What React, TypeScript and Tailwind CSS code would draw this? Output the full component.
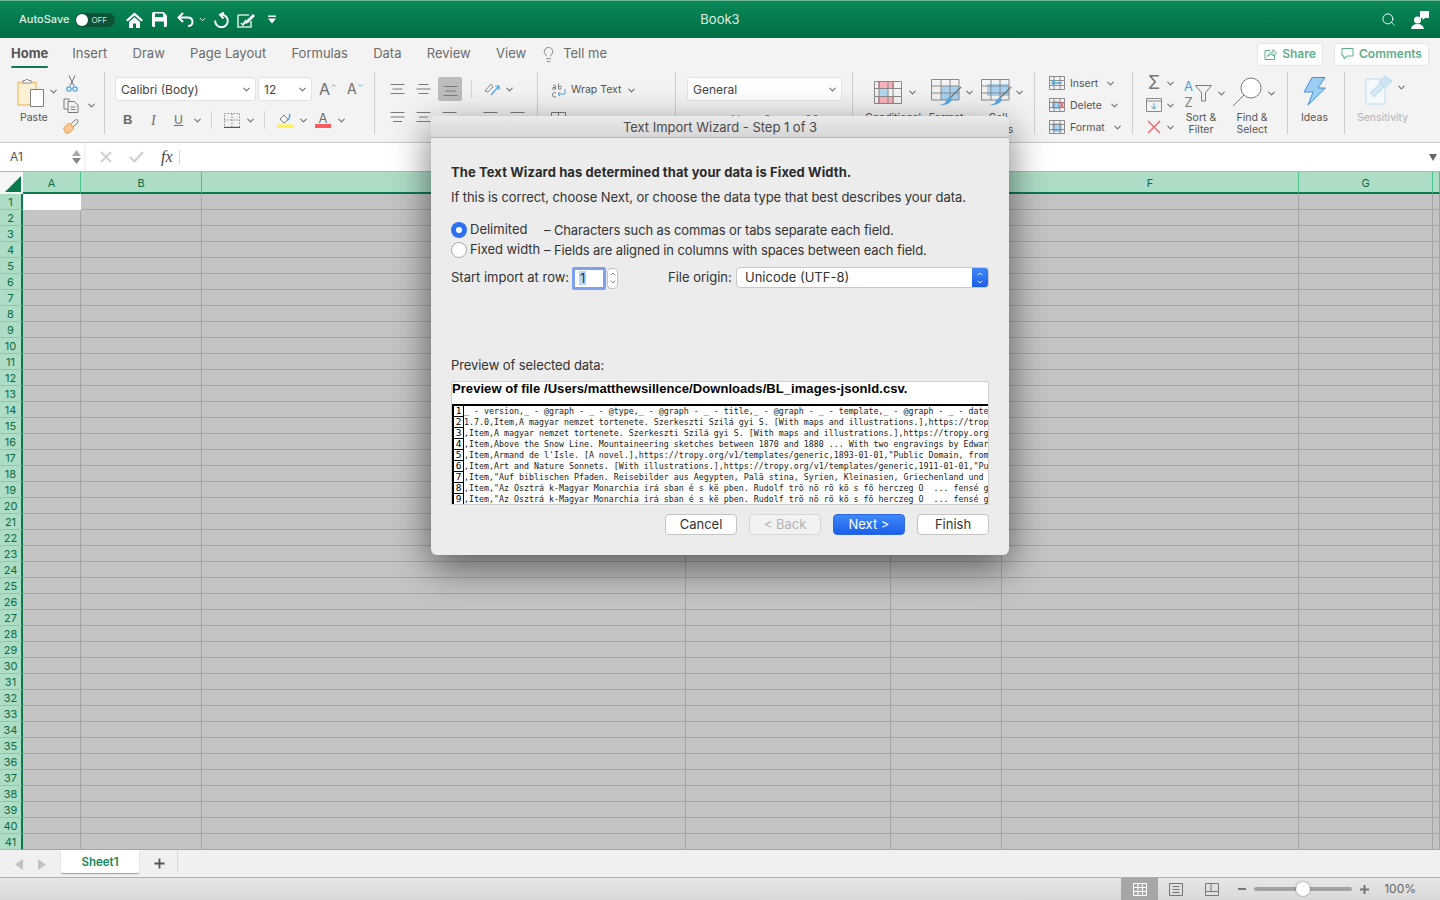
import { ChevronDown, ChevronUp, Search, Lightbulb } from 'lucide-react'

const ui = '[font-family:Inter,"Noto_Sans",sans-serif]'

const columns = [
  { label: 'A', width: 'w-[58px]' },
  { label: 'B', width: 'w-[121px]' },
  { label: 'C', width: 'w-[484px]' },
  { label: 'D', width: 'w-[205px]' },
  { label: 'E', width: 'w-[111px]' },
  { label: 'F', width: 'w-[297px]' },
  { label: 'G', width: 'w-[134px]' },
  { label: '', width: 'w-[7px]' },
]

const rows = Array.from({ length: 41 }, (_, i) => i + 1)

const previewLines = [
  '_ - version,_ - @graph - _ - @type,_ - @graph - _ - title,_ - @graph - _ - template,_ - @graph - _ - date',
  '1.7.0,Item,A magyar nemzet tortenete. Szerkeszti Szilá gyi S. [With maps and illustrations.],https://trop',
  ',Item,A magyar nemzet tortenete. Szerkeszti Szilá gyi S. [With maps and illustrations.],https://tropy.org',
  ',Item,Above the Snow Line. Mountaineering sketches between 1870 and 1880 ... With two engravings by Edwar',
  ',Item,Armand de l\'Isle. [A novel.],https://tropy.org/v1/templates/generic,1893-01-01,"Public Domain, from',
  ',Item,Art and Nature Sonnets. [With illustrations.],https://tropy.org/v1/templates/generic,1911-01-01,"Pu',
  ',Item,"Auf biblischen Pfaden. Reisebilder aus Aegypten, Palä stina, Syrien, Kleinasien, Griechenland und',
  ',Item,"Az Osztrá k-Magyar Monarchia irá sban é s kë pben. Rudolf trö nö rö kö s fö herczeg O  ... fensé g',
  ',Item,"Az Osztrá k-Magyar Monarchia irá sban é s kë pben. Rudolf trö nö rö kö s fö herczeg O  ... fensé g',
]

function Chev({ className = '' }: { className?: string }) {
  return <ChevronDown size={11} strokeWidth={2.2} className={`shrink-0 text-[#6e6e6e] ${className}`} />
}

function Lines({ widths }: { widths: number[] }) {
  return (
    <svg width="15" height="14" viewBox="0 0 15 14" className="shrink-0">
      {widths.map((w, i) => (
        <line key={i} x1={(15 - w) / 2} x2={(15 + w) / 2} y1={2.5 + i * 4.5} y2={2.5 + i * 4.5} stroke="#7a7a7a" />
      ))}
    </svg>
  )
}

function TitleIcons() {
  return (
    <div className="flex items-center ml-[11px]">
      <svg width="17" height="16" viewBox="0 0 17 16" className="shrink-0">
        <path d="M8.5 0.5 L17 8 L15.4 9.4 L8.5 3.4 L1.6 9.4 L0 8 Z M3 10 L8.5 5.2 L14 10 V16 H10 V11.5 H7 V16 H3 Z" fill="#fff" />
      </svg>
      <svg width="15" height="15" viewBox="0 0 15 15" className="ml-[9px] shrink-0">
        <path d="M0 1.5 Q0 0 1.5 0 H11.5 L15 3.5 V13.5 Q15 15 13.5 15 H1.5 Q0 15 0 13.5 Z" fill="#fff" />
        <rect x="3" y="1.5" width="8" height="3.6" fill="#057a50" />
        <rect x="3" y="9.5" width="9" height="5.5" fill="#057a50" />
      </svg>
      <svg width="17" height="15" viewBox="0 0 17 15" className="ml-[10px] shrink-0" fill="none" stroke="#fff" strokeWidth="1.9">
        <path d="M6 1 L1.5 5.5 L6 10" />
        <path d="M1.5 5.5 H10.5 Q15.5 5.5 15.5 10 Q15.5 14 11 14" />
      </svg>
      <ChevronDown size={9} strokeWidth={2.5} className="ml-[4px] text-white shrink-0" />
      <svg width="16" height="16" viewBox="0 0 16 16" className="ml-[6px] shrink-0" fill="none" stroke="#fff" strokeWidth="1.9">
        <path d="M8.5 2.6 A6.3 6.3 0 1 1 2.2 8.5" />
        <path d="M11 0.5 L7 2.8 L10.5 6.5" />
      </svg>
      <svg width="19" height="16" viewBox="0 0 19 16" className="ml-[8px] shrink-0" fill="none">
        <path d="M1 3 H12 M1 3 V15 H14 V9" stroke="#cfe8dc" strokeWidth="1.6" />
        <path d="M4 11 L6 13 L9 8" stroke="#fff" strokeWidth="1.5" />
        <path d="M9 9 L16 2 L18 4 L11 11 L8 12 Z" fill="#fff" />
      </svg>
      <svg width="8" height="9" viewBox="0 0 8 9" className="ml-[12px] shrink-0">
        <rect y="0.5" width="8" height="1.4" fill="#fff" />
        <path d="M0 3.5 H8 L4 8.5 Z" fill="#fff" />
      </svg>
    </div>
  )
}

function PasteIcon() {
  return (
    <svg width="28" height="30" viewBox="0 0 28 30" className="shrink-0" fill="none">
      <path d="M1 4.5 H19 V27 H1 Z" fill="#fdf1d4" stroke="#f2c377" strokeWidth="1.4" />
      <path d="M6 5 V2.5 H8 Q10 0 12 2.5 H14 V5 Z" fill="#fff" stroke="#8a8a8a" />
      <path d="M13.5 11.5 H26.5 V28.5 H13.5 Z" fill="#fff" stroke="#7f7f7f" />
    </svg>
  )
}

function ClipboardGroup() {
  return (
    <div className="flex w-[105px] h-[62px] shrink-0 border-r border-[#cfcfcf] pl-[17px]">
      <div className="flex flex-col w-[46px] shrink-0 pt-[6px]">
        <div className="flex items-center">
          <PasteIcon />
          <Chev className="ml-[3px] mt-[-4px]" />
        </div>
        <span className="mt-[3px] ml-[3px] text-[10.5px] leading-[13px] text-[#555]">Paste</span>
      </div>
      <div className="flex flex-col pt-[3px]">
        <svg width="12" height="17" viewBox="0 0 12 17" className="ml-[3px] shrink-0" fill="none" stroke="#6f6f6f">
          <path d="M3 0.5 L8 11 M9 0.5 L4 11" />
          <circle cx="3" cy="14" r="2.2" stroke="#4aa3dc" strokeWidth="1.2" />
          <circle cx="9" cy="14" r="2.2" stroke="#4aa3dc" strokeWidth="1.2" />
        </svg>
        <div className="flex items-center mt-[6px] shrink-0">
          <svg width="17" height="15" viewBox="0 0 17 15" fill="none" stroke="#7a7a7a">
            <path d="M1 1 H6 V11 H1 Z" />
            <path d="M5 3.5 H11 L15 7 V14.5 H5 Z" fill="#f2f2f2" />
            <path d="M7.5 9 H12.5 M7.5 11.5 H12.5" />
          </svg>
          <Chev className="ml-[6px]" />
        </div>
        <svg width="16" height="15" viewBox="0 0 16 15" className="mt-[6px] shrink-0" fill="none">
          <path d="M0.5 9 L6 4 L11 9 Q8 14 3 14.5 Z" fill="#fbc795" stroke="#ef9a4a" />
          <path d="M8 5 L12 1 Q14 0 15 1.5 Q15.5 3 14 4.5 L10 7.5" fill="#f4f4f4" stroke="#7a7a7a" />
        </svg>
      </div>
    </div>
  )
}

function FontGroup() {
  return (
    <div className="flex flex-col w-[270px] h-[62px] shrink-0 border-r border-[#cfcfcf] pl-[10px]">
      <div className="flex items-center mt-[5px]">
        <div className="flex items-center justify-between w-[141px] h-[24px] bg-white rounded-[3px] border border-[#e2e2e2] pl-[5px] pr-[3px] pt-px text-[12px] text-[#444]">
          <span>Calibri (Body)</span>
          <Chev />
        </div>
        <div className="flex items-center justify-between w-[54px] h-[24px] ml-[2px] bg-white rounded-[3px] border border-[#e2e2e2] pl-[5px] pr-[3px] pt-px text-[12px] text-[#444]">
          <span>12</span>
          <Chev />
        </div>
        <span className="ml-[7px] text-[16px] leading-none text-[#6e6e6e]">A</span>
        <ChevronUp size={7} strokeWidth={3} className="text-[#5aa9e0] mb-[8px]" />
        <span className="ml-[10px] text-[14px] leading-none text-[#6e6e6e]">A</span>
        <ChevronDown size={7} strokeWidth={3} className="text-[#5aa9e0] mb-[8px]" />
      </div>
      <div className="flex items-center mt-[9px] h-[20px] text-[#6b6b6b]">
        <span className="w-[8px] ml-[8px] [font-family:'Liberation_Sans',sans-serif] font-bold text-[13px]">B</span>
        <span className="w-[8px] ml-[20px] [font-family:'Liberation_Serif',serif] italic text-[14px]">I</span>
        <span className="ml-[15px] w-[11px] text-[12px] leading-[14px] underline">U</span>
        <Chev className="ml-[7px]" />
        <div className="w-px h-[18px] bg-[#d4d4d4] ml-[8px]" />
        <svg width="16" height="15" viewBox="0 0 16 15" className="ml-[12px] shrink-0" fill="none">
          <path d="M0.5 0.5 H15.5 V14 H0.5 Z M8 0.5 V14 M0.5 7 H15.5" stroke="#8a8a8a" strokeDasharray="1.5 1.5" />
          <path d="M0 14.5 H16" stroke="#555" />
        </svg>
        <Chev className="ml-[5px]" />
        <div className="w-px h-[18px] bg-[#d4d4d4] ml-[8px]" />
        <svg width="16" height="15" viewBox="0 0 16 15" className="ml-[12px] shrink-0" fill="none">
          <path d="M3 6 L7 2 L11 7 L7 10 Z" stroke="#7a7a7a" fill="#fff" />
          <path d="M11 7 Q14 3 12 1" stroke="#4aa3dc" strokeWidth="1.4" />
          <rect y="11.5" width="16" height="3.5" fill="#fff44f" />
        </svg>
        <Chev className="ml-[5px]" />
        <div className="flex flex-col items-center ml-[6px] w-[16px]">
          <span className="text-[13px] leading-[12px] text-[#6e6e6e]">A</span>
          <div className="w-[16px] h-[4px] bg-[#ff5a5f]" />
        </div>
        <Chev className="ml-[5px]" />
      </div>
    </div>
  )
}

function AlignGroup() {
  return (
    <div className="flex flex-col w-[163px] h-[62px] shrink-0 border-r border-[#cfcfcf] pl-[15px]">
      <div className="flex items-center mt-[5px]">
        <Lines widths={[14, 10, 14]} />
        <div className="ml-[11px]"><Lines widths={[10, 14, 10]} /></div>
        <div className="flex items-center justify-center w-[24px] h-[24px] ml-[7px] rounded-[2px] bg-[#bdbdbd]">
          <div className="mt-[3px]"><Lines widths={[14, 10, 14]} /></div>
        </div>
        <div className="w-px h-[18px] bg-[#d4d4d4] ml-[9px]" />
        <svg width="16" height="14" viewBox="0 0 16 14" className="ml-[12px] shrink-0" fill="none">
          <path d="M1 9 L7 2 L9 5 L4 10 Z" stroke="#8a8a8a" />
          <path d="M7 13 L15 4 M11 4 H15 V8" stroke="#4aa3dc" strokeWidth="1.2" />
        </svg>
        <Chev className="ml-[4px]" />
      </div>
      <div className="flex items-center mt-[9px]">
        <Lines widths={[14, 14, 9]} />
        <div className="ml-[11px]"><Lines widths={[14, 9, 14]} /></div>
        <div className="ml-[11px]"><Lines widths={[14, 14, 9]} /></div>
        <div className="ml-[26px]"><Lines widths={[14, 14, 14]} /></div>
        <div className="ml-[12px]"><Lines widths={[14, 14, 14]} /></div>
      </div>
    </div>
  )
}

function WrapGroup() {
  return (
    <div className="flex flex-col w-[138px] h-[62px] shrink-0 border-r border-[#cfcfcf] pl-[13px]">
      <div className="flex items-center mt-[10px] h-[16px]">
        <svg width="15" height="15" viewBox="0 0 15 15" className="shrink-0">
          <path d="M2 2.5 Q4 1.5 4.5 3 V6.5 M4.5 4.5 Q1 4 1 5.5 Q1.5 7.5 4.5 5.5 M7.5 0.5 V6.5 M7.5 4.5 Q8.5 2.8 10 3.2 Q11 4.5 10 5.8 Q8.5 7 7.5 5.5 M5 10 Q3.5 8.800 2 10 Q1 12 2 13.5 Q3.5 14.5 5 13.5" stroke="#777" fill="none" strokeWidth="0.9" />
          <path d="M14 6 V11 H7 M9 9 L7 11 L9 13" stroke="#4aa3dc" fill="none" />
        </svg>
        <span className="ml-[5px] text-[10.5px] text-[#555]">Wrap Text</span>
        <Chev className="ml-[5px]" />
      </div>
      <svg width="15" height="14" viewBox="0 0 15 14" className="mt-[14px] shrink-0" fill="none" stroke="#7a7a7a">
        <path d="M0.5 0.5 H14.5 V13.5 H0.5 Z M7.5 0.5 V13.5 M0.5 7 H14.5" />
      </svg>
    </div>
  )
}

function NumberGroup() {
  return (
    <div className="flex flex-col w-[177px] h-[62px] shrink-0 border-r border-[#cfcfcf] pl-[11px]">
      <div className="flex items-center justify-between w-[155px] h-[24px] mt-[5px] bg-white rounded-[3px] border border-[#e2e2e2] pl-[5px] pr-[3px] pt-px text-[12px] text-[#444]">
        <span>General</span>
        <Chev />
      </div>
      <div className="flex items-center mt-[10px] pl-[43px] text-[12px] text-[#777]">
        <span>%</span>
        <span className="ml-[22px]">9</span>
        <span className="ml-[30px]">.00</span>
      </div>
    </div>
  )
}

function StyleIcon({ kind }: { kind: 'cond' | 'table' | 'cell' }) {
  if (kind === 'cond') {
    return (
      <svg width="28" height="23" viewBox="0 0 28 23" className="shrink-0" fill="none">
        <rect x="5" y="0.5" width="14" height="7" fill="#f9b4bb" />
        <rect x="5" y="8" width="9" height="7" fill="#b0d6f2" />
        <rect x="5" y="15.5" width="14" height="7" fill="#f9b4bb" />
        <path d="M5 0.5 H19 V7.5 H5 Z M5 15.5 H19 V22.5 H5 Z" stroke="#ee5b62" />
        <path d="M0.5 0.5 H27.5 V22.5 H0.5 Z M0.5 7.5 H27.5 M0.5 15.5 H27.5 M5 0.5 V22.5 M14 0.5 V22.5 M19 0.5 V22.5" stroke="#8a8a8a" />
      </svg>
    )
  }
  return (
    <svg width="31" height="27" viewBox="0 0 31 27" className="shrink-0" fill="none">
      {kind === 'table' ? <rect x="10" y="7" width="18" height="14" fill="#a8d2f2" /> : <rect x="6" y="5" width="22" height="12" fill="#a8d2f2" />}
      <path d="M0.5 0.5 H28 V21 H0.5 Z M0.5 7 H28 M0.5 14 H28 M10 0.5 V21 M19 0.5 V21" stroke="#8a8a8a" />
      <path d="M30 8 L19 19" stroke="#777" strokeWidth="1.5" />
      <path d="M19 18 Q15 20 14 24 Q10 26 8 26 Q18 27 21 21 Z" fill="#5aa9e0" />
    </svg>
  )
}

function StylesGroup() {
  const items = [
    { kind: 'cond' as const, top: 'Conditional', bottom: 'Formatting', box: 'w-[57px]', chev: 'ml-[5px]', label: 'w-[38px]' },
    { kind: 'table' as const, top: 'Format', bottom: 'as Table', box: 'w-[50px]', chev: 'ml-[2px]', label: 'w-[30px]' },
    { kind: 'cell' as const, top: 'Cell', bottom: 'Styles', box: 'w-[50px]', chev: 'ml-[2px]', label: 'w-[34px]' },
  ]
  return (
    <div className="flex w-[182px] h-[62px] shrink-0 border-r border-[#cfcfcf] pl-[21px]">
      {items.map((item) => (
        <div key={item.top} className={`flex flex-col shrink-0 ${item.box} pt-[7px]`}>
          <div className="flex items-center h-[27px] shrink-0">
            <StyleIcon kind={item.kind} />
            <Chev className={item.chev} />
          </div>
          <div className={`flex flex-col items-center shrink-0 ${item.label} mt-[6px] text-[10.5px] leading-[12px] text-[#555] whitespace-nowrap`}>
            <div>{item.top}</div>
            <div>{item.bottom}</div>
          </div>
        </div>
      ))}
    </div>
  )
}

function CellAction({ label, kind }: { label: string; kind: 'insert' | 'delete' | 'format' }) {
  return (
    <div className="flex items-center h-[22px] shrink-0">
      <svg width="16" height="14" viewBox="0 0 16 14" className="shrink-0" fill="none">
        {kind === 'format' && <rect x="4" y="4" width="8" height="7" fill="#a8d2f2" stroke="#6fa8d8" />}
        {kind === 'delete' && <rect x="4" y="4" width="6" height="6" fill="#a8d2f2" stroke="#4a90d0" />}
        <path d="M0.5 0.5 H15.5 V13.5 H0.5 Z M0.5 4.5 H15.5 M0.5 9.5 H15.5 M5 0.5 V13.5 M11 0.5 V13.5" stroke="#8a8a8a" />
        {kind === 'insert' && <path d="M13 7 H3 M6 4 L3 7 L6 10" stroke="#4aa3dc" strokeWidth="1.3" />}
        {kind === 'delete' && <path d="M11 4 L15 10 M15 4 L11 10" stroke="#ee5b62" strokeWidth="1.2" />}
      </svg>
      <span className="ml-[5px] pt-px text-[10.5px] text-[#555]">{label}</span>
      <Chev className="ml-[7px]" />
    </div>
  )
}

function CellsGroup() {
  return (
    <div className="flex flex-col w-[98px] h-[62px] shrink-0 border-r border-[#cfcfcf] pl-[14px]">
      <CellAction label="Insert" kind="insert" />
      <CellAction label="Delete" kind="delete" />
      <CellAction label="Format" kind="format" />
    </div>
  )
}

function EditingGroup() {
  return (
    <div className="flex w-[155px] h-[62px] shrink-0 border-r border-[#cfcfcf] pl-[13px]">
      <div className="flex flex-col w-[37px] shrink-0">
        <div className="flex items-center h-[22px] shrink-0">
          <span className="w-[16px] text-center text-[18px] leading-none text-[#777]">Σ</span>
          <Chev className="ml-[3px]" />
        </div>
        <div className="flex items-center h-[22px] shrink-0">
          <svg width="16" height="14" viewBox="0 0 16 14" className="shrink-0" fill="none">
            <path d="M0.5 0.5 H15.5 V13.5 H0.5 Z M0.5 3 H15.5" stroke="#8a8a8a" />
            <path d="M8 5 V11 M5.5 8.5 L8 11 L10.5 8.5" stroke="#4aa3dc" />
          </svg>
          <Chev className="ml-[3px]" />
        </div>
        <div className="flex items-center h-[22px] shrink-0">
          <svg width="16" height="14" viewBox="0 0 16 14" className="shrink-0" fill="none" stroke="#ee5b62" strokeWidth="1.2">
            <path d="M2 1 L14 13 M14 1 L2 13" />
          </svg>
          <Chev className="ml-[3px]" />
        </div>
      </div>
      <div className="flex flex-col w-[49px] shrink-0 pt-[5px]">
        <div className="flex items-center h-[33px] shrink-0">
          <div className="flex flex-col items-center w-[11px] text-[13px] leading-[16px]">
            <span className="text-[#4aa3dc]">A</span>
            <span className="text-[#7a7a7a]">Z</span>
          </div>
          <svg width="17" height="17" viewBox="0 0 17 17" className="ml-[1px] shrink-0" fill="none" stroke="#7a7a7a">
            <path d="M0.5 0.5 H16.5 L10.5 7.5 V16 H6.5 V7.5 Z" />
          </svg>
          <Chev className="ml-[4px]" />
        </div>
        <div className="w-[36px] mt-[2px] shrink-0 text-center text-[10.5px] leading-[12px] text-[#555]">
          <div>Sort &amp;</div>
          <div>Filter</div>
        </div>
      </div>
      <div className="flex flex-col shrink-0 pt-[5px]">
        <div className="flex items-center h-[33px] shrink-0">
          <svg width="30" height="30" viewBox="0 0 30 30" className="shrink-0 mt-[-3px]" fill="none" stroke="#7a7a7a">
            <circle cx="19" cy="11" r="10" fill="#fff" />
            <path d="M12 18 L1 29" />
          </svg>
          <Chev className="ml-[4px]" />
        </div>
        <div className="w-[40px] mt-[2px] shrink-0 text-center text-[10.5px] leading-[12px] text-[#555]">
          <div>Find &amp;</div>
          <div>Select</div>
        </div>
      </div>
    </div>
  )
}

function IdeasGroup() {
  return (
    <div className="flex flex-col items-center w-[57px] h-[62px] shrink-0 border-r border-[#cfcfcf] pt-[5px] pr-[3px]">
      <svg width="23" height="29" viewBox="0 0 23 29" fill="none" className="shrink-0">
        <path d="M9 0.5 H22 L15 11 H22.5 L5 28 L10 15 H1 Z" fill="#9ccdf3" stroke="#4a90d0" />
      </svg>
      <span className="mt-[6px] text-[10.5px] leading-[12px] text-[#555]">Ideas</span>
    </div>
  )
}

function SensitivityGroup() {
  return (
    <div className="flex flex-col w-[97px] h-[62px] shrink-0 pl-[12px] pt-[3px]">
      <div className="flex items-center ml-[8px] h-[30px] shrink-0">
        <svg width="28" height="30" viewBox="0 0 28 30" className="shrink-0" fill="none" stroke="#bcdcf0">
          <path d="M1 4 H14 L20 10 V29 H1 Z" fill="#f6f9fb" />
          <path d="M5 18 L15 8 L19 12 L9 22 Z" fill="#d5e8f4" />
          <path d="M14 6 L20 1 L27 6 L21 12 Z" fill="#cfe4f2" />
        </svg>
        <Chev className="ml-[3px] mt-[-6px]" />
      </div>
      <span className="mt-[7px] text-[10.5px] leading-[12px] text-[#b2b2b2]">Sensitivity</span>
    </div>
  )
}

function Ribbon() {
  return (
    <div className="h-[104px] shrink-0 bg-[#f3f3f3] overflow-hidden">
      <div className="flex items-center h-[32px] pl-[11px] pr-[11px] text-[13px] text-[#6b6b6b]">
        <div className="relative">
          <span className="font-bold text-[#555]">Home</span>
          <div className="absolute left-0 right-0 bottom-[-4px] h-[2px] bg-[#107c4f] rounded-full" />
        </div>
        <div className="flex items-center gap-[25.3px] ml-[24px]">
          <span>Insert</span>
          <span>Draw</span>
          <span>Page Layout</span>
          <span>Formulas</span>
          <span>Data</span>
          <span>Review</span>
          <span>View</span>
        </div>
        <Lightbulb size={17} strokeWidth={1.2} className="ml-[14px] text-[#777]" />
        <span className="ml-[6px]">Tell me</span>
        <div className="flex items-center justify-center gap-[5px] w-[66px] h-[23px] ml-auto bg-white rounded-[3px] border border-[#e6e6e6] text-[#5fae8b] font-semibold text-[12px]">
          <svg width="13" height="12" viewBox="0 0 13 12" fill="none" stroke="#5fae8b">
            <path d="M6 2.5 H1 V11.5 H10.5 V7" />
            <path d="M3.5 8.5 Q5 4 9 4 V1.5 L12.5 5 L9 8 V6 Q6 6 3.5 8.5 Z" />
          </svg>
          Share
        </div>
        <div className="flex items-center justify-center gap-[5px] w-[95px] h-[23px] ml-[11px] bg-white rounded-[3px] border border-[#e6e6e6] text-[#5fae8b] font-semibold text-[12px]">
          <svg width="13" height="12" viewBox="0 0 13 12" fill="none" stroke="#5fae8b">
            <path d="M1 0.5 H12 V8 H6 L3 11 V8 H1 Z" />
          </svg>
          Comments
        </div>
      </div>
      <div className="flex mt-[2px]">
        <ClipboardGroup />
        <FontGroup />
        <AlignGroup />
        <WrapGroup />
        <NumberGroup />
        <StylesGroup />
        <CellsGroup />
        <EditingGroup />
        <IdeasGroup />
        <SensitivityGroup />
      </div>
    </div>
  )
}

function FormulaBar() {
  return (
    <div className="flex h-[30px] shrink-0 bg-[#f3f3f3] border-t border-[#c9c9c9] border-b border-b-[#b5b5b5]">
      <div className="flex items-center w-[84px] shrink-0 bg-white pl-[10px] pr-[3px] text-[12px] text-[#555]">
        <span>A1</span>
        <div className="flex flex-col gap-[2px] ml-auto">
          <svg width="9" height="6" viewBox="0 0 9 6"><path d="M4.5 0 L9 6 H0 Z" fill="#aaa" /></svg>
          <svg width="9" height="6" viewBox="0 0 9 6"><path d="M4.5 6 L9 0 H0 Z" fill="#888" /></svg>
        </div>
      </div>
      <div className="flex items-center w-[101px] shrink-0 ml-[2px] bg-white pl-[14px]">
        <svg width="12" height="12" viewBox="0 0 12 12" fill="none" stroke="#cfcfcf" strokeWidth="2">
          <path d="M1 1 L11 11 M11 1 L1 11" />
        </svg>
        <svg width="15" height="12" viewBox="0 0 15 12" className="ml-[17px]" fill="none" stroke="#cfcfcf" strokeWidth="2">
          <path d="M1 6 L5.5 10.5 L14 1" />
        </svg>
        <span className="ml-[17px] [font-family:'Liberation_Serif',serif] italic text-[16px] text-[#444]">fx</span>
        <div className="w-px h-[15px] bg-[#d6d6d6] ml-[6px]" />
      </div>
      <div className="flex items-center justify-end flex-1 bg-white pr-[3px]">
        <svg width="8" height="7" viewBox="0 0 8 7"><path d="M0 0 H8 L4 7 Z" fill="#666" /></svg>
      </div>
    </div>
  )
}

function Sheet() {
  return (
    <div className="flex flex-col shrink-0 bg-[#c4c4c4]">
      <div className="flex h-[22px]">
        <div className="flex items-end justify-end w-[23px] shrink-0 bg-[#f6f6f6] pr-[2px] pb-[2px]">
          <svg width="16" height="16" viewBox="0 0 16 16"><path d="M16 0 V16 H0 Z" fill="#0a7a4d" /></svg>
        </div>
        {columns.map((col) => (
          <div
            key={col.width}
            className={`flex items-center justify-center shrink-0 ${col.width} pt-[2px] bg-[#aeddc5] border-r border-[#4cc38a] border-b-2 border-b-[#0a7a4d] text-[11px] text-[#0b6b43]`}
          >
            {col.label}
          </div>
        ))}
      </div>
      {rows.map((row) => (
        <div key={row} className="flex h-[16px]">
          <div className="flex items-center justify-center w-[23px] shrink-0 pt-px bg-[#aeddc5] border-r-2 border-[#0a7a4d] border-b border-b-[#7fd0a5] text-[11px] text-[#0b6b43]">
            {row}
          </div>
          {columns.map((col) => (
            <div
              key={col.width}
              className={
                row === 1 && col.label === 'A'
                  ? `shrink-0 ${col.width} bg-white`
                  : `shrink-0 ${col.width} bg-[#c4c4c4] border-r border-b border-[#a5a5a5]`
              }
            />
          ))}
        </div>
      ))}
    </div>
  )
}

function SheetTabs() {
  return (
    <div className="flex h-[28px] shrink-0 bg-[#f0f0f0] border-b border-[#b0b0b0]">
      <svg width="8" height="11" viewBox="0 0 8 11" className="ml-[15px] mt-[9px]"><path d="M8 0 V11 L0 5.5 Z" fill="#c2c2c2" /></svg>
      <svg width="8" height="11" viewBox="0 0 8 11" className="ml-[15px] mt-[9px]"><path d="M0 0 V11 L8 5.5 Z" fill="#c2c2c2" /></svg>
      <div className="flex items-center justify-center w-[78px] h-[23px] ml-[15px] pt-[2px] bg-white rounded-b-[2px] shadow-[0_1px_1px_rgba(0,0,0,0.35)] text-[#0f8a58] font-semibold text-[11.5px]">
        Sheet1
      </div>
      <svg width="11" height="11" viewBox="0 0 11 11" className="ml-[15px] mt-[8px]"><path d="M5.5 0.5 V10.5 M0.5 5.5 H10.5" stroke="#555" strokeWidth="1.8" /></svg>
      <div className="w-px h-[22px] bg-[#d8d8d8] ml-[12px]" />
    </div>
  )
}

function StatusBar() {
  return (
    <div className="flex items-center justify-end flex-1 bg-linear-to-b from-[#e6e6e6] to-[#d9d9d9] pr-[24px]">
      <div className="flex items-center justify-center w-[37px] h-[22px] bg-[#a6a6a6]">
        <svg width="14" height="13" viewBox="0 0 14 13" fill="none" stroke="#fff">
          <path d="M0.5 0.5 H13.5 V12.5 H0.5 Z M0.5 4.5 H13.5 M0.5 8.5 H13.5 M5 0.5 V12.5 M9.5 0.5 V12.5" />
        </svg>
      </div>
      <svg width="14" height="13" viewBox="0 0 14 13" className="ml-[11px]" fill="none" stroke="#777">
        <path d="M0.5 0.5 H13.5 V12.5 H0.5 Z M3.5 3.5 H10.5 M3.5 6.5 H10.5 M3.5 9.5 H10.5" />
      </svg>
      <svg width="14" height="13" viewBox="0 0 14 13" className="ml-[22px]" fill="none" stroke="#777">
        <path d="M0.5 0.5 H13.5 V12.5 H0.5 Z M0.5 8.5 H13.5 M6 0.5 V8.5" />
      </svg>
      <div className="w-[8px] h-[2px] ml-[19px] bg-[#777]" />
      <div className="flex items-center w-[98px] h-[4px] ml-[8px] rounded-full bg-[#a2a2a2]">
        <div className="w-[14px] h-[14px] ml-[42px] rounded-full bg-white shadow-[0_0_2px_rgba(0,0,0,0.5)]" />
      </div>
      <svg width="9" height="9" viewBox="0 0 9 9" className="ml-[8px]"><path d="M4.5 0 V9 M0 4.5 H9" stroke="#777" strokeWidth="2" /></svg>
      <span className="ml-[15px] text-[12px] text-[#666]">100%</span>
    </div>
  )
}

function Radio({ on }: { on: boolean }) {
  return on ? (
    <div className="flex items-center justify-center w-[16px] h-[16px] shrink-0 rounded-full bg-[#2f70f2]">
      <div className="w-[6px] h-[6px] rounded-full bg-white" />
    </div>
  ) : (
    <div className="w-[16px] h-[16px] shrink-0 rounded-full bg-white border border-[#a9a9a9]" />
  )
}

function DialogButton({ label, kind = 'plain' }: { label: string; kind?: 'plain' | 'disabled' | 'primary' }) {
  const styles = {
    plain: 'bg-white border-[#c4c4c4] text-[#333]',
    disabled: 'bg-[#f2f2f2] border-[#d6d6d6] text-[#b4b4b4]',
    primary: 'bg-linear-to-b from-[#3f87f8] to-[#1b5fe9] border-[#2a6ae6] text-white',
  }
  return (
    <div className={`flex items-center justify-center w-[72px] h-[21px] rounded-[4px] border text-[13px] ${styles[kind]}`}>
      {label}
    </div>
  )
}

function Dialog() {
  return (
    <div className="absolute left-[431px] top-[116px] flex flex-col w-[578px] h-[439px] rounded-[6px] bg-[#ececec] overflow-hidden shadow-[0_12px_38px_rgba(0,0,0,0.55)] text-[13px] text-[#333]">
      <div className="flex items-center justify-center h-[22px] pt-[3px] shrink-0 bg-linear-to-b from-[#ebebeb] to-[#d6d6d6] border-b border-[#b4b4b4] text-[13px] tracking-[-0.02px] text-[#4a4a4a]">
        Text Import Wizard - Step 1 of 3
      </div>
      <div className="flex flex-col flex-1 pl-[20px] pr-[20px]">
        <div className="mt-[26px] h-[16px] leading-[16px] font-bold text-[#2b2b2b] tracking-[0.1px]">
          The Text Wizard has determined that your data is Fixed Width.
        </div>
        <div className="mt-[9px] h-[16px] leading-[16px] tracking-[-0.07px]">
          If this is correct, choose Next, or choose the data type that best describes your data.
        </div>
        <div className="flex items-center mt-[15px] h-[20px]">
          <Radio on />
          <span className="ml-[3px] w-[74px]">Delimited</span>
          <span className="mt-[2px] tracking-[-0.12px]">– Characters such as commas or tabs separate each field.</span>
        </div>
        <div className="flex items-center h-[20px]">
          <Radio on={false} />
          <span className="ml-[3px] w-[74px] tracking-[-0.05px]">Fixed width</span>
          <span className="mt-[2px] tracking-[-0.12px]">– Fields are aligned in columns with spaces between each field.</span>
        </div>
        <div className="flex items-center mt-[6px] h-[24px]">
          <span className="w-[121px] shrink-0 whitespace-nowrap">Start import at row:</span>
          <div className="flex items-center w-[34px] h-[23px] shrink-0 pl-[4px] bg-white border-[3px] border-[#7f9ff0] rounded-[2px]">
            <span className="px-[1px] leading-[14px] bg-[#b5d5ff]">1</span>
          </div>
          <div className="flex flex-col items-center justify-center w-[11px] h-[21px] shrink-0 ml-[1px] rounded-[4px] bg-white border border-[#c4c4c4] text-[#444]">
            <ChevronUp size={8} strokeWidth={2} />
            <ChevronDown size={8} strokeWidth={2} />
          </div>
          <span className="ml-[50px] w-[63px] shrink-0 whitespace-nowrap">File origin:</span>
          <div className="flex items-center justify-between w-[253px] h-[21px] shrink-0 ml-[5px] mt-[-1px] pl-[8px] bg-white border border-[#c8c8c8] rounded-[4px] overflow-hidden">
            <span>Unicode (UTF-8)</span>
            <div className="flex flex-col items-center justify-center w-[16px] h-full bg-linear-to-b from-[#3f87f8] to-[#1b5fe9] text-white">
              <ChevronUp size={8} strokeWidth={2.5} />
              <ChevronDown size={8} strokeWidth={2.5} />
            </div>
          </div>
        </div>
        <div className="mt-[67px] h-[16px] leading-[16px] tracking-[-0.08px]">Preview of selected data:</div>
        <div className="flex flex-col mt-[8px] h-[124px] bg-white border border-[#cfcfcf] overflow-hidden">
          <div className="h-[22px] shrink-0 [font-family:'Liberation_Sans',sans-serif] font-bold text-[13px] tracking-[0.06px] leading-[13px] text-black">
            Preview of file /Users/matthewsillence/Downloads/BL_images-jsonld.csv.
          </div>
          <div className="border-t-2 border-l-2 border-black [font-family:'DejaVu_Sans_Mono',monospace] text-[8.3px] leading-[11px] text-[#222]">
            {previewLines.map((line, i) => (
              <div key={i} className="flex h-[11px]">
                <div className="w-[10px] shrink-0 border-r border-b border-black text-center text-black text-[9.5px] leading-[10px]">{i + 1}</div>
                <div className="whitespace-pre overflow-hidden">{line}</div>
              </div>
            ))}
          </div>
        </div>
        <div className="flex justify-end gap-[12px] mt-[9px]">
          <DialogButton label="Cancel" />
          <DialogButton label="< Back" kind="disabled" />
          <DialogButton label="Next >" kind="primary" />
          <DialogButton label="Finish" />
        </div>
      </div>
    </div>
  )
}

export default function App() {
  return (
    <div className={`relative flex flex-col w-[1440px] h-[900px] overflow-hidden bg-[#f3f3f3] ${ui}`}>
      {/* Title bar */}
      <div className="flex items-center h-[38px] shrink-0 bg-linear-to-b from-[#0a8757] to-[#006f45] border-t border-[#6fb896] text-white pl-[19px] pr-[10px]">
        <span className="text-[11px] font-medium text-[#dff1e8]">AutoSave</span>
        <div className="flex items-center w-[40px] h-[14px] ml-[6px] rounded-full bg-[#0c5236] pl-px">
          <div className="w-[12px] h-[12px] rounded-full bg-white" />
          <span className="ml-[3px] text-[8px] leading-none text-[#cfe5da]">OFF</span>
        </div>
        <TitleIcons />
        <span className="absolute left-0 right-0 text-center text-[13px] text-[#dff1e8] pointer-events-none">Book3</span>
        <Search size={15} strokeWidth={1.5} className="ml-auto" />
        <svg width="19" height="18" viewBox="0 0 19 18" className="ml-[15px]" fill="#fff">
          <path d="M9 0 H18 V7 H14 L11.5 9 V7 H9 Z" />
          <circle cx="6.5" cy="9" r="3.5" />
          <path d="M0 18 Q1 13 6.5 13 Q12 13 13 18 Z" />
        </svg>
      </div>
      <Ribbon />
      <FormulaBar />
      <Sheet />
      <SheetTabs />
      <StatusBar />
      <Dialog />
    </div>
  )
}
